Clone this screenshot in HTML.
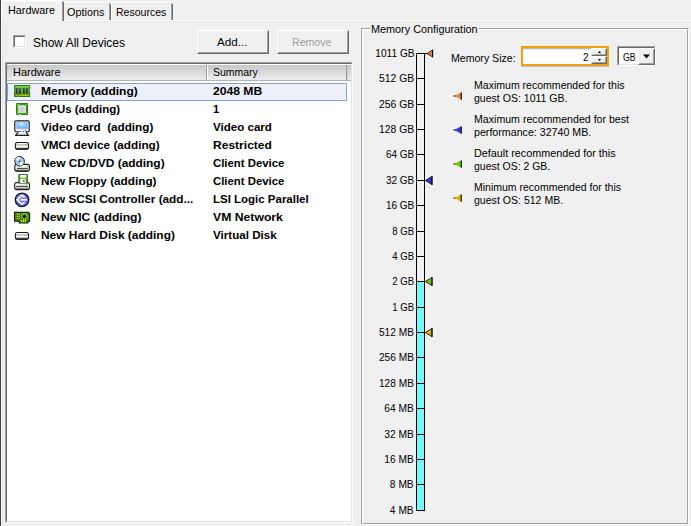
<!DOCTYPE html>
<html><head><meta charset="utf-8"><title>VM Properties</title>
<style>
html,body{margin:0;padding:0}
body{width:691px;height:526px;overflow:hidden;background:#f0f0f0;font-family:"Liberation Sans", sans-serif;font-size:11px;color:#000;position:relative}
.a,.t{position:absolute}
.t{white-space:pre;display:block}
</style></head>
<body>
<div class="a" style="left:0px;top:0px;width:1px;height:526px;background:#404040;"></div>
<div class="a" style="left:1px;top:20px;width:1px;height:506px;background:#fff;"></div>
<div class="a" style="left:2px;top:21px;width:1px;height:505px;background:#e3e3e3;"></div>
<div class="a" style="left:64px;top:20px;width:627px;height:1px;background:#fff;"></div>
<div class="a" style="left:64px;top:21px;width:627px;height:1px;background:#e8e8e8;"></div>
<div class="a" style="left:1px;top:1px;width:1px;height:20px;background:#fff;"></div>
<div class="a" style="left:2px;top:0px;width:60px;height:1px;background:#fff;"></div>
<div class="a" style="left:2px;top:1px;width:1px;height:20px;background:#f6f6f6;"></div>
<div class="a" style="left:3px;top:1px;width:59px;height:1px;background:#f6f6f6;"></div>
<div class="a" style="left:62px;top:1px;width:1px;height:20px;background:#a0a0a0;"></div>
<div class="a" style="left:63px;top:2px;width:1px;height:19px;background:#696969;"></div>
<div class="a" style="left:64px;top:2px;width:45px;height:1px;background:#fff;"></div>
<div class="a" style="left:64px;top:3px;width:45px;height:1px;background:#e3e3e3;"></div>
<div class="a" style="left:109px;top:3px;width:1px;height:17px;background:#a0a0a0;"></div>
<div class="a" style="left:110px;top:4px;width:1px;height:16px;background:#696969;"></div>
<div class="a" style="left:111px;top:3px;width:1px;height:17px;background:#fff;"></div>
<div class="a" style="left:112px;top:2px;width:59px;height:1px;background:#fff;"></div>
<div class="a" style="left:112px;top:3px;width:59px;height:1px;background:#e3e3e3;"></div>
<div class="a" style="left:171px;top:3px;width:1px;height:17px;background:#a0a0a0;"></div>
<div class="a" style="left:172px;top:4px;width:1px;height:16px;background:#696969;"></div>
<div class="a" style="left:13px;top:35px;width:13px;height:13px;background:#fff;box-sizing:border-box;border:1px solid;border-color:#a0a0a0 #fff #fff #a0a0a0"><div style="width:100%;height:100%;box-sizing:border-box;border:1px solid;border-color:#696969 #e3e3e3 #e3e3e3 #696969"></div></div>
<div class="a" style="left:197px;top:30px;width:72px;height:24px;box-sizing:border-box;border:1px solid;border-color:#fff #696969 #696969 #fff;background:#f0f0f0"><div style="width:100%;height:100%;box-sizing:border-box;border:1px solid;border-color:#f0f0f0 #a0a0a0 #a0a0a0 #f0f0f0"></div></div>
<div class="a" style="left:277px;top:30px;width:72px;height:24px;box-sizing:border-box;border:1px solid;border-color:#fff #696969 #696969 #fff;background:#f0f0f0"><div style="width:100%;height:100%;box-sizing:border-box;border:1px solid;border-color:#f0f0f0 #a0a0a0 #a0a0a0 #f0f0f0"></div></div>
<div class="a" style="left:5px;top:62px;width:348px;height:461px;box-sizing:border-box;border:1px solid;border-color:#a0a0a0 #fff #fff #a0a0a0;background:#fff"><div style="width:100%;height:100%;box-sizing:border-box;border:1px solid;border-color:#696969 #e3e3e3 #e3e3e3 #696969"></div></div>
<div class="a" style="left:7px;top:64px;width:344px;height:1px;background:#fff;"></div>
<div class="a" style="left:7px;top:65px;width:344px;height:15px;background:linear-gradient(#c8c8c8,#eeeeee);"></div>
<div class="a" style="left:7px;top:80px;width:344px;height:1px;background:#b4b4b4;"></div>
<div class="a" style="left:206px;top:65px;width:1px;height:15px;background:#a0a0a0;"></div>
<div class="a" style="left:207px;top:65px;width:1px;height:15px;background:#fff;"></div>
<div class="a" style="left:346px;top:65px;width:1px;height:15px;background:#a0a0a0;"></div>
<div class="a" style="left:347px;top:65px;width:1px;height:15px;background:#c8c8c8;"></div>
<div class="a" style="left:7px;top:83px;width:340px;height:18px;box-sizing:border-box;border:1px solid #84a6d6;background:#edf0f9"></div>
<div class="a" style="left:361px;top:28px;width:328px;height:497px;box-sizing:border-box;border:1px solid;border-color:#a0a0a0 #fff #fff #a0a0a0"><div style="width:100%;height:100%;box-sizing:border-box;border:1px solid;border-color:#fff #a0a0a0 #a0a0a0 #fff"></div></div>
<div class="a" style="left:370px;top:26px;width:109px;height:6px;background:#f0f0f0;"></div>
<div class="a" style="left:416px;top:53px;width:1px;height:458px;background:#000;"></div>
<div class="a" style="left:424px;top:53px;width:1px;height:458px;background:#000;"></div>
<div class="a" style="left:417px;top:282px;width:7px;height:228px;background:#72fbfb;"></div>
<div class="a" style="left:416px;top:53px;width:9px;height:1px;background:#000;"></div>
<div class="a" style="left:416px;top:78px;width:9px;height:1px;background:#000;"></div>
<div class="a" style="left:416px;top:104px;width:9px;height:1px;background:#000;"></div>
<div class="a" style="left:416px;top:129px;width:9px;height:1px;background:#000;"></div>
<div class="a" style="left:416px;top:154px;width:9px;height:1px;background:#000;"></div>
<div class="a" style="left:416px;top:180px;width:9px;height:1px;background:#000;"></div>
<div class="a" style="left:416px;top:205px;width:9px;height:1px;background:#000;"></div>
<div class="a" style="left:416px;top:231px;width:9px;height:1px;background:#000;"></div>
<div class="a" style="left:416px;top:256px;width:9px;height:1px;background:#000;"></div>
<div class="a" style="left:416px;top:281px;width:9px;height:1px;background:#000;"></div>
<div class="a" style="left:416px;top:307px;width:9px;height:1px;background:#000;"></div>
<div class="a" style="left:416px;top:332px;width:9px;height:1px;background:#000;"></div>
<div class="a" style="left:416px;top:357px;width:9px;height:1px;background:#000;"></div>
<div class="a" style="left:416px;top:383px;width:9px;height:1px;background:#000;"></div>
<div class="a" style="left:416px;top:408px;width:9px;height:1px;background:#000;"></div>
<div class="a" style="left:416px;top:434px;width:9px;height:1px;background:#000;"></div>
<div class="a" style="left:416px;top:459px;width:9px;height:1px;background:#000;"></div>
<div class="a" style="left:416px;top:484px;width:9px;height:1px;background:#000;"></div>
<div class="a" style="left:416px;top:510px;width:9px;height:1px;background:#000;"></div>
<div class="a" style="left:425px;top:53px;width:2px;height:1px;background:#000;"></div>
<svg width="0" height="0" style="position:absolute"><defs>
<linearGradient id="gGray" x1="0" y1="0" x2="0" y2="1"><stop offset="0" stop-color="#ffffff"/><stop offset="0.55" stop-color="#f4f4f4"/><stop offset="1" stop-color="#8a8a8a"/></linearGradient>
<linearGradient id="gBox" x1="0" y1="0" x2="0" y2="1"><stop offset="0" stop-color="#ffffff"/><stop offset="0.2" stop-color="#ffffff"/><stop offset="0.26" stop-color="#c9c9c9"/><stop offset="0.44" stop-color="#c9c9c9"/><stop offset="0.5" stop-color="#ffffff"/><stop offset="0.62" stop-color="#ffffff"/><stop offset="0.8" stop-color="#9a9a9a"/><stop offset="0.94" stop-color="#303030"/><stop offset="1" stop-color="#222"/></linearGradient>
<radialGradient id="gCpu" cx="0.5" cy="0.5" r="0.75"><stop offset="0" stop-color="#c6c6c8"/><stop offset="0.6" stop-color="#dcdcde"/><stop offset="1" stop-color="#ffffff"/></radialGradient>
<radialGradient id="gScr" cx="0.45" cy="0.25" r="0.8"><stop offset="0" stop-color="#c6f0ff"/><stop offset="0.5" stop-color="#86c8fc"/><stop offset="1" stop-color="#5eaef8"/></radialGradient>
<radialGradient id="gScsi" cx="0.4" cy="0.35" r="0.75"><stop offset="0" stop-color="#9494fc"/><stop offset="1" stop-color="#5454d8"/></radialGradient>
<linearGradient id="gMem" x1="0" y1="0" x2="0" y2="1"><stop offset="0" stop-color="#8ad662"/><stop offset="0.28" stop-color="#5cb832"/><stop offset="1" stop-color="#3a9816"/></linearGradient><linearGradient id="gChip" x1="0" y1="0" x2="0" y2="1"><stop offset="0" stop-color="#5c5262"/><stop offset="1" stop-color="#2a2030"/></linearGradient><linearGradient id="gCpuB" x1="0" y1="0" x2="1" y2="0"><stop offset="0" stop-color="#5cb62c"/><stop offset="1" stop-color="#2c860e"/></linearGradient>
</defs></svg>
<svg class="a" style="left:14px;top:83px" width="17" height="18" viewBox="0 0 17 18"><path d="M0.5 2.5 H15.7 V6.3 H15 V8.2 H15.7 V13.5 H4.9 V12.6 H3.9 V13.5 H0.5 V8.2 H1.2 V6.3 H0.5 Z" fill="url(#gMem)" stroke="#2a7a0e" stroke-width="1"/><rect x="1.9" y="5" width="1.8" height="5.8" fill="url(#gChip)"/><rect x="4.9" y="5" width="1.8" height="5.8" fill="url(#gChip)"/><rect x="9" y="5" width="1.8" height="5.8" fill="url(#gChip)"/><rect x="12" y="5" width="1.8" height="5.8" fill="url(#gChip)"/><path d="M1.5 12.3 H3.8 M5.2 12.3 H14.8" stroke="#ecc00c" stroke-width="1"/></svg>
<svg class="a" style="left:14px;top:101px" width="17" height="18" viewBox="0 0 17 18"><path d="M2.5 2.5 H13.6 V13.6 H7.3 V12.6 H4.8 V13.6 H2.5 Z" fill="url(#gCpuB)" stroke="#2a7c0c" stroke-width="1"/><rect x="4.3" y="4.3" width="7.7" height="7.6" fill="url(#gCpu)"/><circle cx="3.6" cy="3.6" r="0.5" fill="#d8f0c8"/><circle cx="12.7" cy="3.6" r="0.5" fill="#d8f0c8"/><circle cx="3.6" cy="12.5" r="0.5" fill="#d8f0c8"/><circle cx="12.7" cy="12.5" r="0.5" fill="#d8f0c8"/></svg>
<svg class="a" style="left:14px;top:119px" width="17" height="18" viewBox="0 0 17 18"><rect x="0.8" y="1.8" width="14.4" height="10.9" rx="1.3" fill="#f6f4ff" stroke="#1a1a1a" stroke-width="1.15"/><rect x="2.5" y="3" width="11.3" height="6.9" fill="url(#gScr)" stroke="#c0b8f0" stroke-width="0.5"/><rect x="5.3" y="11.6" width="6.3" height="2.4" fill="#dedcf4"/><circle cx="6.3" cy="12.6" r="0.65" fill="#4848b8"/><circle cx="9.3" cy="12.6" r="0.65" fill="#4848b8"/><circle cx="11.5" cy="11.3" r="0.85" fill="#48d808"/><path d="M4.2 13.5 L1.5 16.3 H14.7 L12 13.5" fill="#ecebfa" stroke="#1a1a1a" stroke-width="1.15" stroke-linejoin="round"/></svg>
<svg class="a" style="left:14px;top:137px" width="17" height="18" viewBox="0 0 17 18"><rect x="1.4" y="5.5" width="13.1" height="6.9" rx="1.9" ry="1.9" fill="url(#gBox)" stroke="#1c1c1c" stroke-width="1.1"/><path d="M2.2 12 H13.8" stroke="#2a2a2a" stroke-width="1"/><circle cx="11.5" cy="7.5" r="0.8" fill="#6ee012"/></svg>
<svg class="a" style="left:14px;top:155px" width="17" height="18" viewBox="0 0 17 18"><rect x="0.8" y="9.4" width="14.6" height="6.8" rx="1.8" fill="url(#gGray)" stroke="#1a1a1a" stroke-width="1.1"/><path d="M1.6 15.8 H14.6" stroke="#2a2a2a" stroke-width="1"/><path d="M3 13.4 H13.9" stroke="#3a3a3a" stroke-width="1"/><circle cx="13.5" cy="11.6" r="0.95" fill="#6ee012"/><circle cx="5.6" cy="6.25" r="4.8" fill="#9cc6f8" stroke="#26262e" stroke-width="1"/><path d="M5.6 6.25 L1.3 5 A4.5 4.5 0 0 1 5.2 1.8 Z" fill="#ffffff" opacity="0.85"/><path d="M5.6 6.25 L9.9 7.4 A4.5 4.5 0 0 1 6.2 10.7 Z" fill="#ffffff" opacity="0.85"/><circle cx="5.5" cy="6.3" r="0.9" fill="#2a2a3a"/></svg>
<svg class="a" style="left:14px;top:173px" width="17" height="18" viewBox="0 0 17 18"><rect x="0.7" y="9.6" width="14.8" height="7" rx="1.8" fill="url(#gGray)" stroke="#1a1a1a" stroke-width="1.1"/><path d="M1.5 16.2 H14.7" stroke="#2a2a2a" stroke-width="1"/><path d="M2.2 13.5 Q8 12.9 13.8 13.5" fill="none" stroke="#2e2e2e" stroke-width="1"/><path d="M4.8 1.5 H13.4 V10.1 H4.8 Z" fill="#58b014" stroke="#3a4a30" stroke-width="0.9"/><rect x="6.2" y="1.9" width="6.1" height="2.7" fill="#fbfdf8"/><rect x="6.2" y="5.7" width="5.4" height="4.4" fill="#f3f2f8"/><rect x="9.2" y="6.8" width="1.2" height="2.3" rx="0.5" fill="#2f7a08"/><circle cx="12.6" cy="11.6" r="0.85" fill="#6ee012"/></svg>
<svg class="a" style="left:14px;top:191px" width="17" height="18" viewBox="0 0 17 18"><circle cx="8.05" cy="8.85" r="6.75" fill="url(#gScsi)" stroke="#18182e" stroke-width="1.4"/><path d="M10.7 6.4 L7.9 4.3 L3.1 8.8 L7.9 13.3 L10.7 11.2" fill="none" stroke="#fff" stroke-width="1.5" stroke-linejoin="miter"/><path d="M6.6 8.85 H13.1" stroke="#fff" stroke-width="1.5"/></svg>
<svg class="a" style="left:14px;top:209px" width="17" height="18" viewBox="0 0 17 18"><path d="M0.6 3.4 H14.6 L15.6 4.6 V12.3 H13.8 V14 H5.2 V12.2 H0.6 Z" fill="#2f8a10" stroke="#0e1a0a" stroke-width="1.1"/><path d="M1.1 4.3 H14.4" stroke="#48a822" stroke-width="0.8"/><path d="M1.2 5.4 H2.6 M1.2 7.5 H2.6 M1.2 9.5 H2.6" stroke="#e8401c" stroke-width="1.2"/><path d="M2.9 5.4 H4.1 M2.9 7.5 H4.1 M2.9 9.5 H4.1" stroke="#f4c810" stroke-width="1.2"/><path d="M4.9 5.4 H6 M4.9 7.5 H6 M4.9 9.5 H6" stroke="#f0dc10" stroke-width="1.2"/><path d="M6.4 5.4 H6.9 M6.4 7.5 H6.9 M6.4 9.5 H6.9" stroke="#1a2a30" stroke-width="1.2"/><circle cx="10.3" cy="7.4" r="2.7" fill="none" stroke="#f4dc10" stroke-width="1.3" stroke-dasharray="1.1 1.02"/><circle cx="10.3" cy="7.4" r="1.55" fill="#101018"/><path d="M7.4 11 V13.2 M9.5 11 V13.2 M11.5 11 V13.2" stroke="#f8e010" stroke-width="1.1"/></svg>
<svg class="a" style="left:14px;top:227px" width="17" height="18" viewBox="0 0 17 18"><rect x="1.4" y="5.5" width="13.1" height="6.9" rx="1.9" ry="1.9" fill="url(#gBox)" stroke="#1c1c1c" stroke-width="1.1"/><path d="M2.2 12 H13.8" stroke="#2a2a2a" stroke-width="1"/><circle cx="11.5" cy="7.5" r="0.8" fill="#6ee012"/></svg>
<svg class="a" style="left:426px;top:47px" width="12" height="13" viewBox="0 0 12 13"><path d="M1.00 6.50 L6.60 3.00 L6.60 10.00 Z" fill="#f08040" stroke="#1a1a1a" stroke-width="0.9" stroke-linejoin="miter"/><path d="M6.60 2.70 V10.30" stroke="#111" stroke-width="1.1"/></svg>
<svg class="a" style="left:424px;top:174px" width="12" height="13" viewBox="0 0 12 13"><path d="M1.30 6.50 L8.00 2.40 L8.00 10.60 Z" fill="#3030f0" stroke="#1a1a1a" stroke-width="0.9" stroke-linejoin="miter"/><path d="M8.00 2.10 V10.90" stroke="#111" stroke-width="1.1"/></svg>
<svg class="a" style="left:424px;top:275px" width="12" height="13" viewBox="0 0 12 13"><path d="M1.30 6.50 L8.00 2.40 L8.00 10.60 Z" fill="#66cc00" stroke="#1a1a1a" stroke-width="0.9" stroke-linejoin="miter"/><path d="M8.00 2.10 V10.90" stroke="#111" stroke-width="1.1"/></svg>
<svg class="a" style="left:424px;top:326px" width="12" height="13" viewBox="0 0 12 13"><path d="M1.30 6.50 L8.00 2.40 L8.00 10.60 Z" fill="#e0b000" stroke="#1a1a1a" stroke-width="0.9" stroke-linejoin="miter"/><path d="M8.00 2.10 V10.90" stroke="#111" stroke-width="1.1"/></svg>
<svg class="a" style="left:453px;top:90.5px" width="11" height="10" viewBox="0 0 11 10"><path d="M0.3 5 L3 5" stroke="#111" stroke-width="1"/><path d="M1.8 5 L8 1.7 L8 8.3 Z" fill="#f08040" stroke="#f08040" stroke-width="0.5"/><path d="M8.3 1.4 V8.7" stroke="#151515" stroke-width="1.2"/></svg>
<svg class="a" style="left:453px;top:125px" width="11" height="10" viewBox="0 0 11 10"><path d="M0.3 5 L3 5" stroke="#111" stroke-width="1"/><path d="M1.8 5 L8 1.7 L8 8.3 Z" fill="#3030f0" stroke="#3030f0" stroke-width="0.5"/><path d="M8.3 1.4 V8.7" stroke="#151515" stroke-width="1.2"/></svg>
<svg class="a" style="left:453px;top:159px" width="11" height="10" viewBox="0 0 11 10"><path d="M0.3 5 L3 5" stroke="#111" stroke-width="1"/><path d="M1.8 5 L8 1.7 L8 8.3 Z" fill="#66cc00" stroke="#66cc00" stroke-width="0.5"/><path d="M8.3 1.4 V8.7" stroke="#151515" stroke-width="1.2"/></svg>
<svg class="a" style="left:453px;top:193px" width="11" height="10" viewBox="0 0 11 10"><path d="M0.3 5 L3 5" stroke="#111" stroke-width="1"/><path d="M1.8 5 L8 1.7 L8 8.3 Z" fill="#e0b000" stroke="#e0b000" stroke-width="0.5"/><path d="M8.3 1.4 V8.7" stroke="#151515" stroke-width="1.2"/></svg>
<div class="a" style="left:521px;top:46px;width:88px;height:20px;background:#fff;box-sizing:border-box;border:2px solid #f0a30a;"></div>
<div class="a" style="left:521px;top:66px;width:88px;height:1px;background:#b9bdc9;"></div>
<div class="a" style="left:523px;top:48px;width:68px;height:1px;background:#b6b6b6;"></div>
<div class="a" style="left:523px;top:49px;width:68px;height:1px;background:#ededed;"></div>
<div class="a" style="left:591px;top:48px;width:16px;height:8px;box-sizing:border-box;border:1px solid;border-color:#fff #696969 #696969 #fff;background:#f0f0f0"><div style="width:100%;height:100%;box-sizing:border-box;border:1px solid;border-color:#f0f0f0 #a0a0a0 #a0a0a0 #f0f0f0"></div></div>
<div class="a" style="left:591px;top:56px;width:16px;height:8px;box-sizing:border-box;border:1px solid;border-color:#fff #696969 #696969 #fff;background:#f0f0f0"><div style="width:100%;height:100%;box-sizing:border-box;border:1px solid;border-color:#f0f0f0 #a0a0a0 #a0a0a0 #f0f0f0"></div></div>
<svg class="a" style="left:591px;top:48px" width="16" height="16" viewBox="0 0 16 16"><path d="M6.9 5 H10.1 L8.5 2.9 Z M6.9 11 H10.1 L8.5 13.1 Z" fill="#000"/></svg>
<div class="a" style="left:617px;top:46px;width:39px;height:20px;box-sizing:border-box;border:1px solid;border-color:#a0a0a0 #fff #fff #a0a0a0;background:#fff"><div style="width:100%;height:100%;box-sizing:border-box;border:1px solid;border-color:#696969 #e3e3e3 #e3e3e3 #696969"></div></div>
<div class="a" style="left:638px;top:48px;width:17px;height:17px;box-sizing:border-box;border:1px solid;border-color:#fff #696969 #696969 #fff;background:#f0f0f0"><div style="width:100%;height:100%;box-sizing:border-box;border:1px solid;border-color:#f0f0f0 #a0a0a0 #a0a0a0 #f0f0f0"></div></div>
<svg class="a" style="left:638px;top:48px" width="16" height="16" viewBox="0 0 16 16"><path d="M5 6.5 L12 6.5 L8.5 10.5 Z" fill="#000"/></svg>
<span class="t" style="left:8.30px;top:2.99px;font-size:11px;line-height:14px;transform:scaleX(0.9835);transform-origin:0 0;">Hardware</span>
<span class="t" style="left:67.20px;top:4.99px;font-size:11px;line-height:14px;transform:scaleX(0.9862);transform-origin:0 0;">Options</span>
<span class="t" style="left:115.90px;top:4.99px;font-size:11px;line-height:14px;transform:scaleX(0.9567);transform-origin:0 0;">Resources</span>
<span class="t" style="left:33.20px;top:34.84px;font-size:12px;line-height:16px;transform:scaleX(0.9995);transform-origin:0 0;">Show All Devices</span>
<span class="t" style="left:216.60px;top:35.19px;font-size:11px;line-height:14px;transform:scaleX(1.0609);transform-origin:0 0;">Add...</span>
<span class="t" style="left:292.10px;top:35.19px;font-size:11px;line-height:14px;transform:scaleX(0.9617);transform-origin:0 0;color:#a0a0a0;">Remove</span>
<span class="t" style="left:13.30px;top:65.19px;font-size:11px;line-height:14px;transform:scaleX(0.9961);transform-origin:0 0;">Hardware</span>
<span class="t" style="left:213.00px;top:65.19px;font-size:11px;line-height:14px;transform:scaleX(0.9519);transform-origin:0 0;">Summary</span>
<span class="t" style="left:41.30px;top:84.19px;font-size:11px;line-height:14px;transform:scaleX(1.0922);transform-origin:0 0;font-weight:700;">Memory (adding)</span>
<span class="t" style="left:213.40px;top:84.19px;font-size:11px;line-height:14px;transform:scaleX(1.1021);transform-origin:0 0;font-weight:700;">2048 MB</span>
<span class="t" style="left:41.30px;top:102.19px;font-size:11px;line-height:14px;transform:scaleX(1.0425);transform-origin:0 0;font-weight:700;">CPUs (adding)</span>
<span class="t" style="left:213.40px;top:102.19px;font-size:11px;line-height:14px;transform:scaleX(1.0122);transform-origin:0 0;font-weight:700;">1</span>
<span class="t" style="left:41.30px;top:120.19px;font-size:11px;line-height:14px;transform:scaleX(1.0641);transform-origin:0 0;font-weight:700;">Video card &nbsp;(adding)</span>
<span class="t" style="left:213.40px;top:120.19px;font-size:11px;line-height:14px;transform:scaleX(1.0509);transform-origin:0 0;font-weight:700;">Video card</span>
<span class="t" style="left:41.30px;top:138.19px;font-size:11px;line-height:14px;transform:scaleX(1.0670);transform-origin:0 0;font-weight:700;">VMCI device (adding)</span>
<span class="t" style="left:213.40px;top:138.19px;font-size:11px;line-height:14px;transform:scaleX(1.0949);transform-origin:0 0;font-weight:700;">Restricted</span>
<span class="t" style="left:41.30px;top:156.19px;font-size:11px;line-height:14px;transform:scaleX(1.0815);transform-origin:0 0;font-weight:700;">New CD/DVD (adding)</span>
<span class="t" style="left:213.40px;top:156.19px;font-size:11px;line-height:14px;transform:scaleX(1.0334);transform-origin:0 0;font-weight:700;">Client Device</span>
<span class="t" style="left:41.30px;top:174.19px;font-size:11px;line-height:14px;transform:scaleX(1.0677);transform-origin:0 0;font-weight:700;">New Floppy (adding)</span>
<span class="t" style="left:213.40px;top:174.19px;font-size:11px;line-height:14px;transform:scaleX(1.0334);transform-origin:0 0;font-weight:700;">Client Device</span>
<span class="t" style="left:41.30px;top:192.19px;font-size:11px;line-height:14px;transform:scaleX(1.0695);transform-origin:0 0;font-weight:700;">New SCSI Controller (add...</span>
<span class="t" style="left:213.40px;top:192.19px;font-size:11px;line-height:14px;transform:scaleX(1.0436);transform-origin:0 0;font-weight:700;">LSI Logic Parallel</span>
<span class="t" style="left:41.30px;top:210.19px;font-size:11px;line-height:14px;transform:scaleX(1.1047);transform-origin:0 0;font-weight:700;">New NIC (adding)</span>
<span class="t" style="left:213.40px;top:210.19px;font-size:11px;line-height:14px;transform:scaleX(1.1101);transform-origin:0 0;font-weight:700;">VM Network</span>
<span class="t" style="left:41.30px;top:228.19px;font-size:11px;line-height:14px;transform:scaleX(1.0845);transform-origin:0 0;font-weight:700;">New Hard Disk (adding)</span>
<span class="t" style="left:213.40px;top:228.19px;font-size:11px;line-height:14px;transform:scaleX(1.0559);transform-origin:0 0;font-weight:700;">Virtual Disk</span>
<span class="t" style="left:370.80px;top:22.19px;font-size:11px;line-height:14px;transform:scaleX(0.9850);transform-origin:0 0;">Memory Configuration</span>
<span class="t" style="left:451.20px;top:50.99px;font-size:11px;line-height:14px;transform:scaleX(0.9606);transform-origin:0 0;">Memory Size:</span>
<span class="t" style="left:583.20px;top:50.39px;font-size:11px;line-height:14px;transform:scaleX(0.9143);transform-origin:0 0;">2</span>
<span class="t" style="left:623.40px;top:50.39px;font-size:11px;line-height:14px;transform:scaleX(0.7921);transform-origin:0 0;">GB</span>
<span class="t" style="left:474.30px;top:78.19px;font-size:11px;line-height:14px;transform:scaleX(0.9579);transform-origin:0 0;">Maximum recommended for this</span>
<span class="t" style="left:474.30px;top:91.19px;font-size:11px;line-height:14px;transform:scaleX(0.9576);transform-origin:0 0;">guest OS: 1011 GB.</span>
<span class="t" style="left:474.30px;top:111.99px;font-size:11px;line-height:14px;transform:scaleX(0.9640);transform-origin:0 0;">Maximum recommended for best</span>
<span class="t" style="left:474.30px;top:124.99px;font-size:11px;line-height:14px;transform:scaleX(0.9688);transform-origin:0 0;">performance: 32740 MB.</span>
<span class="t" style="left:474.30px;top:145.99px;font-size:11px;line-height:14px;transform:scaleX(0.9813);transform-origin:0 0;">Default recommended for this</span>
<span class="t" style="left:474.30px;top:158.99px;font-size:11px;line-height:14px;transform:scaleX(0.9514);transform-origin:0 0;">guest OS: 2 GB.</span>
<span class="t" style="left:474.30px;top:179.89px;font-size:11px;line-height:14px;transform:scaleX(0.9542);transform-origin:0 0;">Minimum recommended for this</span>
<span class="t" style="left:474.30px;top:192.89px;font-size:11px;line-height:14px;transform:scaleX(0.9598);transform-origin:0 0;">guest OS: 512 MB.</span>
<span class="t" style="left:372.39px;top:46.29px;font-size:11px;line-height:14px;transform:scaleX(0.9223);transform-origin:100% 0;">1011 GB</span>
<span class="t" style="left:376.69px;top:71.39px;font-size:11px;line-height:14px;transform:scaleX(0.9449);transform-origin:100% 0;">512 GB</span>
<span class="t" style="left:376.69px;top:97.39px;font-size:11px;line-height:14px;transform:scaleX(0.9449);transform-origin:100% 0;">256 GB</span>
<span class="t" style="left:376.69px;top:122.39px;font-size:11px;line-height:14px;transform:scaleX(0.9449);transform-origin:100% 0;">128 GB</span>
<span class="t" style="left:382.81px;top:147.39px;font-size:11px;line-height:14px;transform:scaleX(0.9070);transform-origin:100% 0;">64 GB</span>
<span class="t" style="left:382.81px;top:173.39px;font-size:11px;line-height:14px;transform:scaleX(0.9070);transform-origin:100% 0;">32 GB</span>
<span class="t" style="left:382.81px;top:198.39px;font-size:11px;line-height:14px;transform:scaleX(0.9070);transform-origin:100% 0;">16 GB</span>
<span class="t" style="left:388.92px;top:224.39px;font-size:11px;line-height:14px;transform:scaleX(0.8709);transform-origin:100% 0;">8 GB</span>
<span class="t" style="left:388.92px;top:249.39px;font-size:11px;line-height:14px;transform:scaleX(0.8709);transform-origin:100% 0;">4 GB</span>
<span class="t" style="left:388.92px;top:274.39px;font-size:11px;line-height:14px;transform:scaleX(0.8709);transform-origin:100% 0;">2 GB</span>
<span class="t" style="left:388.92px;top:300.39px;font-size:11px;line-height:14px;transform:scaleX(0.8709);transform-origin:100% 0;">1 GB</span>
<span class="t" style="left:376.08px;top:325.39px;font-size:11px;line-height:14px;transform:scaleX(0.9215);transform-origin:100% 0;">512 MB</span>
<span class="t" style="left:376.08px;top:350.39px;font-size:11px;line-height:14px;transform:scaleX(0.9215);transform-origin:100% 0;">256 MB</span>
<span class="t" style="left:376.08px;top:376.39px;font-size:11px;line-height:14px;transform:scaleX(0.9215);transform-origin:100% 0;">128 MB</span>
<span class="t" style="left:382.20px;top:401.39px;font-size:11px;line-height:14px;transform:scaleX(0.9256);transform-origin:100% 0;">64 MB</span>
<span class="t" style="left:382.20px;top:427.39px;font-size:11px;line-height:14px;transform:scaleX(0.9256);transform-origin:100% 0;">32 MB</span>
<span class="t" style="left:382.20px;top:452.39px;font-size:11px;line-height:14px;transform:scaleX(0.9256);transform-origin:100% 0;">16 MB</span>
<span class="t" style="left:388.31px;top:477.39px;font-size:11px;line-height:14px;transform:scaleX(0.9271);transform-origin:100% 0;">8 MB</span>
<span class="t" style="left:388.31px;top:503.39px;font-size:11px;line-height:14px;transform:scaleX(0.9271);transform-origin:100% 0;">4 MB</span>
</body></html>
